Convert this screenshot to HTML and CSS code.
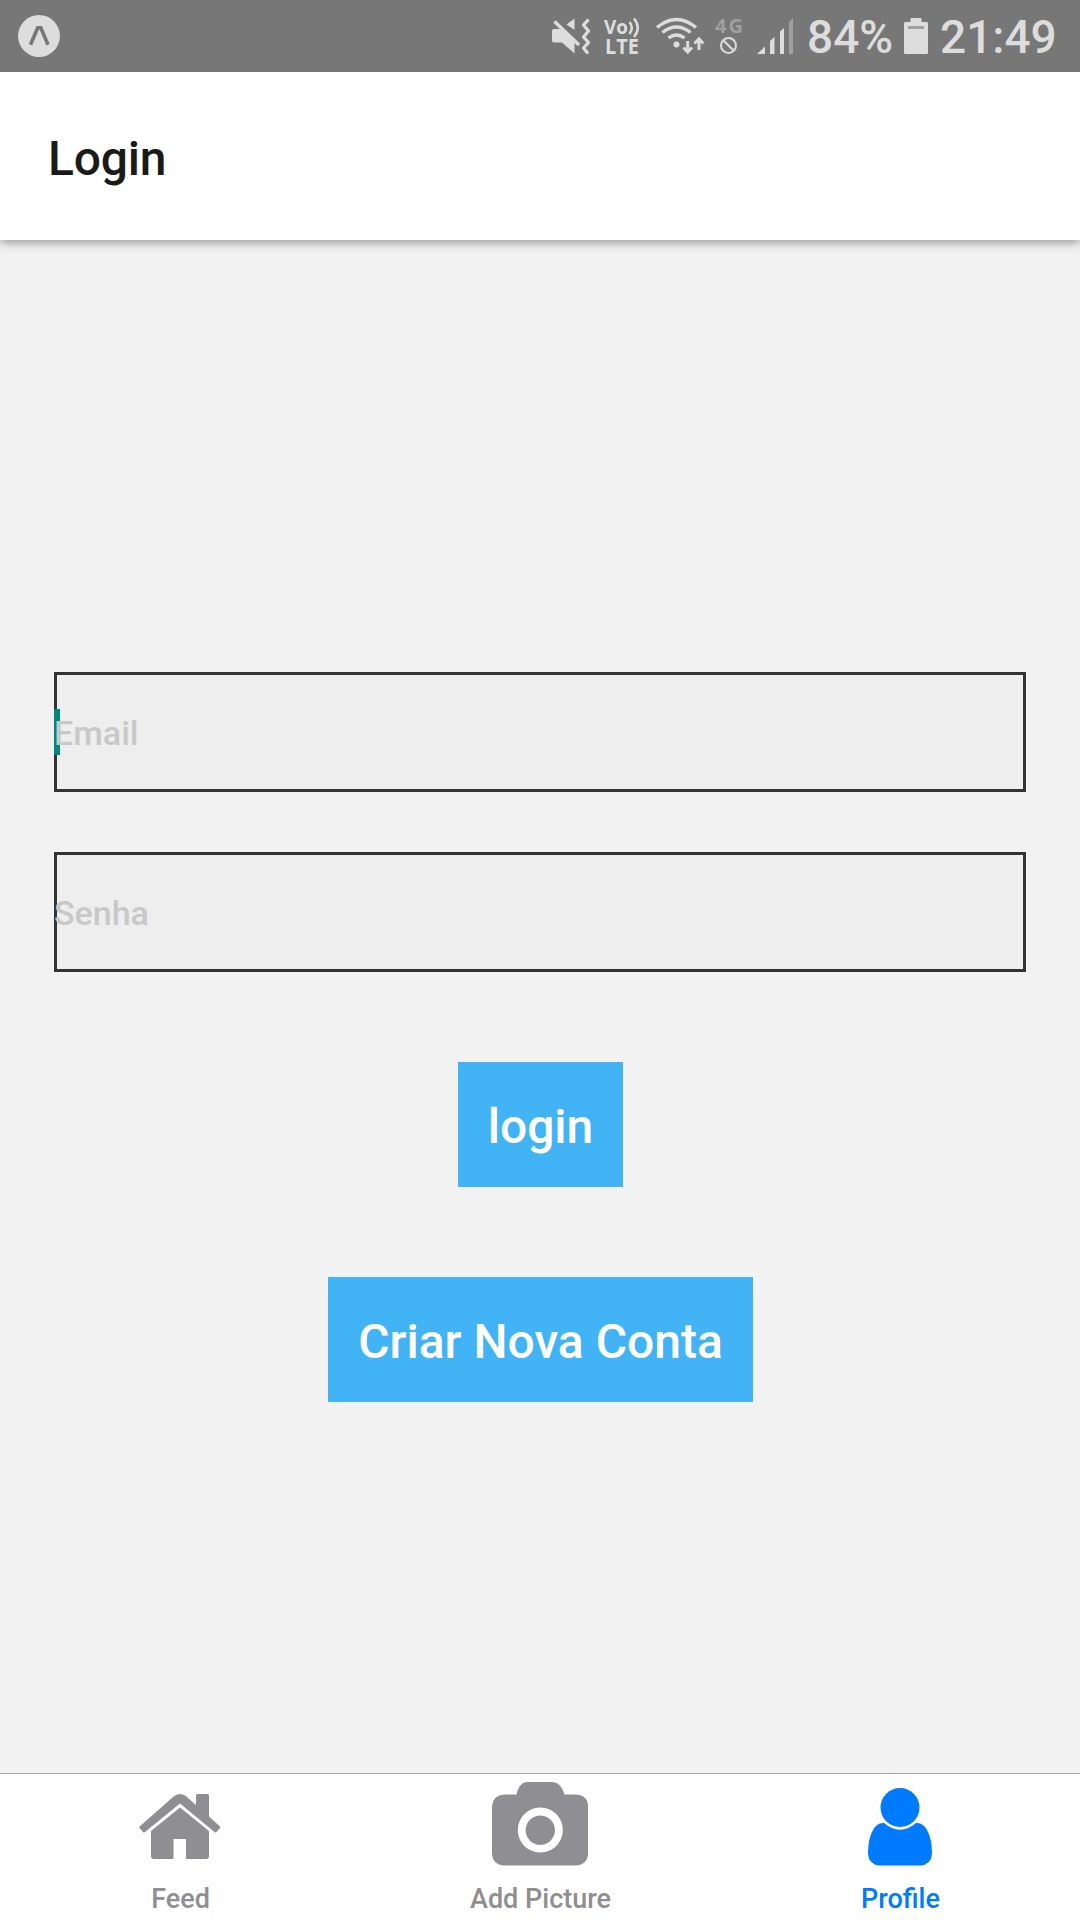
FILE: index.html
```html
<!DOCTYPE html>
<html lang="pt-BR">
<head>
<meta charset="utf-8">
<title>Login</title>
<link rel="stylesheet" href="styles.css">
</head>
<body>
<div class="status">
  <svg class="app-icon" width="42" height="42" viewBox="18 15 42 42"><circle cx="39" cy="36" r="21" fill="#ddd"/><path d="M30.500 44.800 37.700 27.700H40.800L48 44.800" fill="none" stroke="#777" stroke-width="3.600"/></svg>
  <div class="indicators">
    <svg width="38" height="36" viewBox="552 18 38 36"><path d="M574.500 18.500V30L566.500 24.500ZM552 31Q552 29 554 29H560L574.500 42V53.500L562 42.500H554Q552 42.500 552 40.500Z" fill="#ddd"/><path d="M554.500 21.500 579 45" stroke="#ddd" stroke-width="3.400"/><path d="M588.500 19.500 583.500 25 588.500 31 583.500 37 588.500 42.500 583.500 48 588 53.500" fill="none" stroke="#ddd" stroke-width="3.300" stroke-linejoin="round"/></svg>
    <svg width="36" height="38" viewBox="604 17 36 38"><g fill="#ddd" class="badge-text"><text x="604" y="34" font-size="20" textLength="24" lengthAdjust="spacingAndGlyphs">Vo</text><text x="605" y="53.800" font-size="21" textLength="34" lengthAdjust="spacingAndGlyphs">LTE</text></g><path d="M629.500 22Q634 27.500 629.500 34M634 18.500Q641.500 27.500 634 37" fill="none" stroke="#ddd" stroke-width="2.500"/></svg>
    <svg class="wifi" width="48" height="38" viewBox="656 16 48 38"><g fill="none" stroke="#ddd" stroke-width="3.400"><path d="M657 26.500Q676.500 10.500 696 26.500M662.500 31.500Q676.500 20.500 690.500 31.500M668.500 37Q676.500 31 684.500 37"/></g><circle cx="676.500" cy="43.500" r="3" fill="#ddd"/><path d="M687.700 40V50M683.500 46.500 687.700 51 692 46.500M699 49V39M694.500 42.500 699 38 703.300 42.500" fill="none" stroke="#ddd" stroke-width="3"/></svg>
    <svg class="mobile" width="28" height="38" viewBox="715 16 28 38"><text class="badge-text" x="715" y="32" font-size="20" fill="#a0a0a0" textLength="28">4G</text><circle cx="728.500" cy="44.500" r="7.500" fill="none" stroke="#ddd" stroke-width="2"/><path d="M723.300 39.300 733.800 49.800" stroke="#ddd" stroke-width="2"/></svg>
    <svg width="36" height="36" viewBox="757 17 36 36"><path d="M757 53 765 45.500V53ZM770 40 774.500 36V53H770ZM780 30.500 784 27V53H780Z" fill="#ddd"/><path d="M789 21 793 17V53H789Z" fill="#a0a0a0"/></svg>
    <span class="percent">84%</span>
    <svg width="24" height="36" viewBox="904 18 24 36"><path d="M911 18H921Q921.500 18 921.500 19V22H926.500Q928 22 928 23.500V52.500Q928 54 926.500 54H905.500Q904 54 904 52.500V23.500Q904 22 905.500 22H910.500V19Q910.500 18 911 18Z" fill="#ddd"/><path d="M908 26H924V29H908Z" fill="#a0a0a0"/></svg>
    <span class="clock">21:49</span>
  </div>
</div>
<header class="header"><h1>Login</h1></header>
<main class="content">
  <div class="field focused"><span>Email</span></div>
  <div class="field"><span>Senha</span></div>
  <button class="button">login</button>
  <button class="button wide">Criar Nova Conta</button>
</main>
<nav class="tabs">
  <a class="tab"><svg width="82" height="84" viewBox="139 1781 82 84"><path d="M139.600 1826.500 174.500 1795.800Q180 1792 185.500 1795.800L196 1805.300V1795.500Q196 1794 197.500 1794H207.500Q209 1794 209 1795.500V1816.500L220 1826.500Q220.500 1827.500 220 1828L216.500 1832Q215.500 1833 214.500 1832L180 1803.500 145 1832Q144 1833 143 1832L139.500 1828Q139 1827.300 139.600 1826.500ZM180 1807.500 209 1831V1856Q209 1859 206 1859H186V1839H173.500V1859H154Q151 1859 151 1856V1831Z"/></svg><span>Feed</span></a>
  <a class="tab"><svg width="96" height="84" viewBox="492 1781 96 84"><path fill-rule="evenodd" d="M504 1794.500H516.500Q519 1782 528 1782H552Q561 1782 564.500 1794.500H576Q588 1795.500 588 1806V1853.500Q587 1865 576 1865.500H504Q493 1865 492 1853.500V1806Q493 1795.500 504 1794.500ZM540.300 1807.500A22.500 22.500 0 1 0 540.310 1807.500ZM540.300 1815.500A14.700 14.700 0 1 1 540.290 1815.500Z"/></svg><span>Add Picture</span></a>
  <a class="tab active"><svg width="64" height="84" viewBox="868 1781 64 84"><circle cx="900" cy="1807.500" r="19.500"/><path d="M884 1823Q900 1836.500 916 1823Q924 1822.500 928 1832Q932 1840 932 1854Q931 1865 920 1865.500H880Q869 1865 868 1854Q868 1840 872 1832Q876 1822.500 884 1823Z"/></svg><span>Profile</span></a>
</nav>
</body>
</html>
```
FILE: styles.css
```css
* { box-sizing: border-box; }
body {
  margin: 0;
  width: 1080px;
  height: 1920px;
  display: flex;
  flex-direction: column;
  background: #f2f2f2;
  font-family: Roboto, sans-serif;
  font-weight: 500;
  overflow: hidden;
}
svg { display: block; flex: none; overflow: visible; }
.status {
  position: relative;
  z-index: 1;
  height: 72px;
  flex: none;
  display: flex;
  justify-content: space-between;
  align-items: center;
  padding: 0 25px 0 18px;
  background: #777;
  color: #ddd;
  font-size: 46px;
  line-height: 72px;
}
.indicators { display: flex; align-items: center; width: 503px; gap: 14px; }
.badge-text { font-family: "Open Sans", sans-serif; font-weight: 700; }
.wifi { margin-left: 2px; }
.mobile { margin-left: -3px; }
.percent { width: 83px; white-space: nowrap; padding-top: 2px; }
.clock { margin-left: -2px; white-space: nowrap; padding-top: 2px; }
.header {
  position: relative;
  height: 168px;
  flex: none;
  display: flex;
  align-items: center;
  padding: 6px 48px 0;
  background: #fff;
  box-shadow: 0 2px 10px rgba(0, 0, 0, .42);
}
.header h1 {
  margin: 0;
  font-size: 48px;
  font-weight: 500;
  line-height: 64px;
  letter-spacing: -.2px;
  color: #1a1a1a;
}
.content {
  flex: 1;
  display: flex;
  flex-direction: column;
  align-items: center;
  padding: 432px 54px 0;
}
.field {
  width: 100%;
  height: 120px;
  margin-bottom: 60px;
  display: flex;
  align-items: center;
  padding-top: 2px;
  border: 3px solid #333;
  background: #eee;
  color: #c8c8c8;
  font-size: 34px;
  position: relative;
}
.field span { position: relative; left: -3px; }
.focused::before {
  content: "";
  position: absolute;
  left: -3px;
  top: 34px;
  width: 6px;
  height: 46px;
  background: #00897b;
}
.button {
  width: 165px;
  height: 125px;
  margin: 30px 0 60px 1px;
  padding: 4px 0 0;
  border: 0;
  background: #42b3f5;
  color: #fff;
  font: 500 48px Roboto, sans-serif;
  white-space: nowrap;
}
.wide { width: 425px; }
.tabs {
  height: 147px;
  flex: none;
  display: flex;
  border-top: 1px solid #a7a7aa;
  background: #fff;
}
.tab {
  flex: 1;
  display: flex;
  flex-direction: column;
  align-items: center;
  justify-content: flex-end;
  padding-bottom: 5px;
  color: #8e8e93;
  fill: currentColor;
  font-size: 27px;
  line-height: 32px;
}
.tab svg { margin-bottom: 18px; }
.tab span { padding-left: 1px; }
.active { color: #007aff; }
```
